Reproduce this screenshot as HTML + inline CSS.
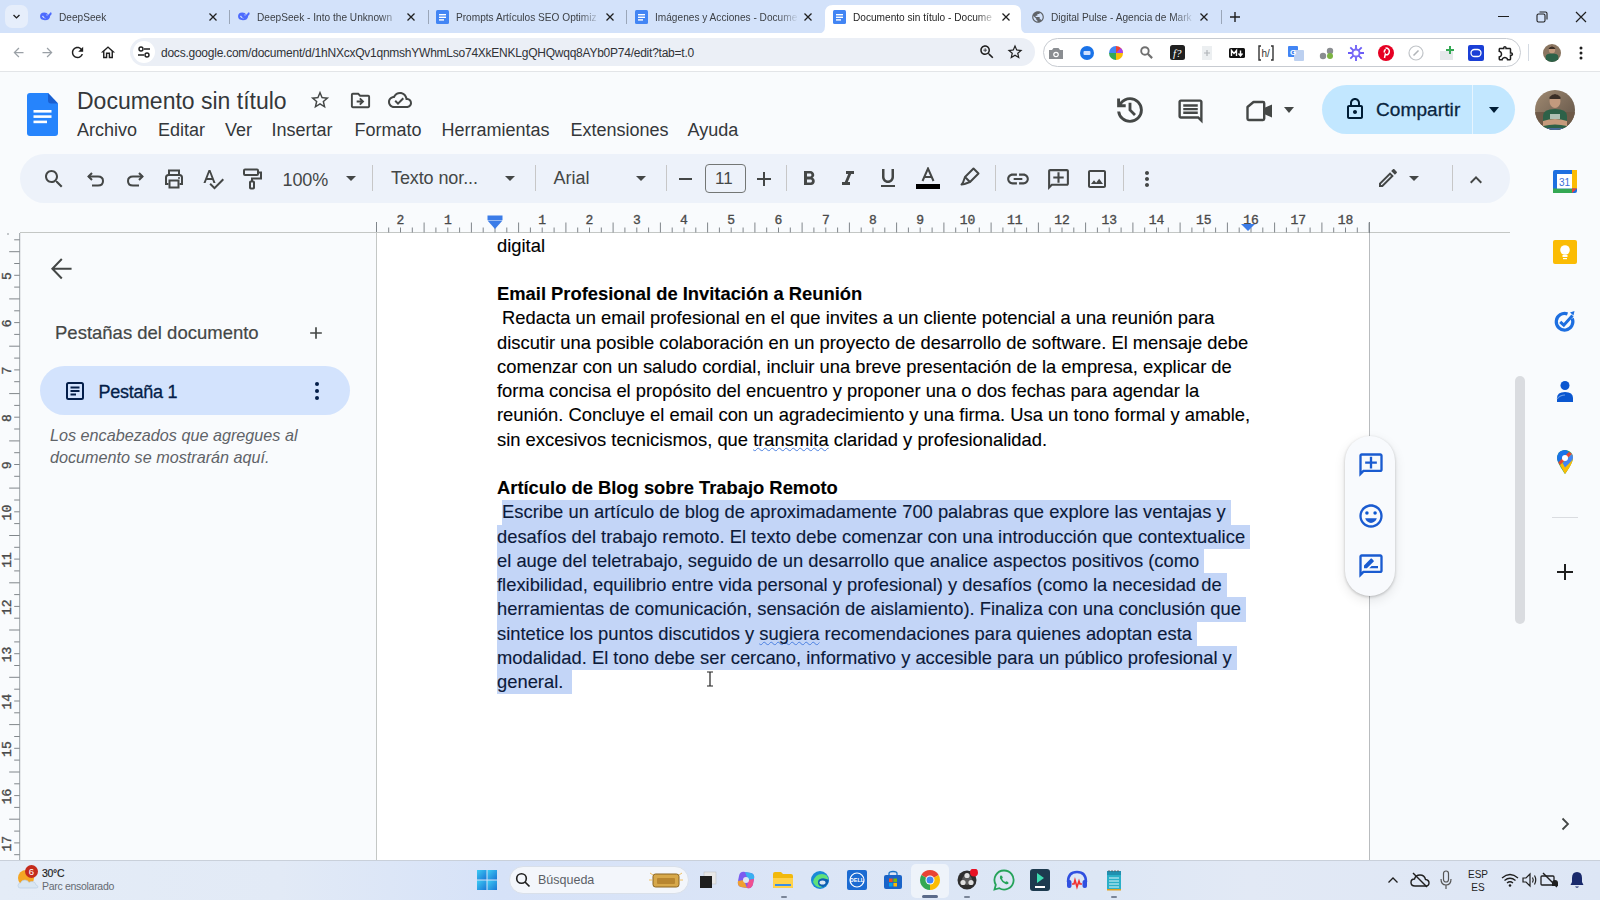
<!DOCTYPE html>
<html><head><meta charset="utf-8">
<style>
*{box-sizing:border-box;margin:0;padding:0}
html,body{width:1600px;height:900px;overflow:hidden;background:#f9fbfd;font-family:"Liberation Sans",sans-serif;position:relative}
.a{position:absolute}
svg{display:block}
.tabstrip{left:0;top:0;width:1600px;height:33px;background:#d3e2fa}
.tab{top:0;height:33px;font-size:11.5px;color:#3d4146;white-space:nowrap}
.tt{top:11px;line-height:13px}
.tx{font-size:15px;color:#1f1f1f;top:8px;line-height:16px}
.sep{width:1px;height:14px;background:#9aa6b8;top:10px}
.addr{left:0;top:33px;width:1600px;height:39px;background:#fff;border-bottom:1px solid #e3e5e8}
.omni{left:130px;top:38px;width:905px;height:28px;border-radius:14px;background:#ebeff6}
.ext{left:1043px;top:38px;width:478px;height:29px;border-radius:15px;border:1px solid #c7cbd1;background:#fff}
.url{left:161px;top:46px;font-size:12px;letter-spacing:-0.24px;color:#303236;line-height:14px;white-space:nowrap}
.menu{top:119.5px;font-size:18px;color:#34373a;line-height:20px;white-space:nowrap}
.title{left:77px;top:88px;font-size:23px;color:#34373a;line-height:26px;white-space:nowrap}
.tbar{left:20px;top:154px;width:1490px;height:49px;border-radius:25px;background:#edf2fa}
.tsep{width:1px;height:26px;background:#c7c7c7;top:165px}
.ttxt{top:168px;font-size:18px;color:#444746;line-height:20px;white-space:nowrap}
.ic{fill:#444746}
.page{left:376px;top:233px;width:994px;height:627px;background:#fff;overflow:hidden}
.doc{left:121px;top:0.5px;font-size:18.37px;line-height:24.25px;color:#000;-webkit-text-stroke:0.12px #000}
.doc div{height:24.25px;white-space:pre}
.sel{background:#c3d5f7;color:#0c1a3a;-webkit-text-stroke:0.12px #0c1a3a;display:inline-block;height:24.25px;vertical-align:top}
.taskbar{left:0;top:860px;width:1600px;height:40px;background:linear-gradient(90deg,#e4ecf7 0,#e2eaf6 280px,#d6e2f8 500px,#dbe5f6 800px,#dde7f5 1100px,#e2e9f5 1250px,#dde6f5 1600px);border-top:1px solid #c9d0da}
</style></head><body>

<!-- TAB STRIP -->
<div class="a tabstrip"></div>
<div class="a" style="left:5px;top:5px;width:23px;height:23px;border-radius:7px;background:#e6eefb"></div>
<svg class="a" style="left:11px;top:11px" width="11" height="11" viewBox="0 0 24 24"><path d="M5.5 8.5l6.5 6.5 6.5-6.5" stroke="#1f1f1f" stroke-width="3" fill="none"/></svg>
<svg class="a" style="left:817px;top:0" width="212" height="34" viewBox="0 0 212 34"><path d="M0 34 Q8 34 8 26 L8 13 Q8 5 16 5 L196 5 Q204 5 204 13 L204 26 Q204 34 212 34 Z" fill="#fff"/></svg>
<div class="a" style="left:39px;top:10px"><svg width="14" height="12" viewBox="0 0 20 16"><path d="M1.5 8.5Q1.5 3 7.5 3 11.5 3 13.5 6.2L16.5 2.5Q18.5 2.8 18 5 17.5 6.5 16 7.5 15.5 14 8.5 14 1.5 14 1.5 8.5Z" fill="#4d6bfe"/><path d="M4 8Q5.5 12 10 11.5 7 10.5 6 7.5Z" fill="#d3e2fa"/><circle cx="11.5" cy="6.5" r="0.9" fill="#d3e2fa"/></svg></div>
<div class="a tab tt" style="left:59px;width:145px;overflow:hidden;-webkit-mask-image:linear-gradient(90deg,#000 85%,transparent)"><span style="display:inline-block;transform:scaleX(0.88);transform-origin:0 0">DeepSeek</span></div>
<div class="a" style="left:208px;top:12px"><svg width="10" height="10" viewBox="0 0 10 10"><path d="M1.5 1.5L8.5 8.5M8.5 1.5L1.5 8.5" stroke="#1f1f1f" stroke-width="1.3"/></svg></div>
<div class="a" style="left:237px;top:10px"><svg width="14" height="12" viewBox="0 0 20 16"><path d="M1.5 8.5Q1.5 3 7.5 3 11.5 3 13.5 6.2L16.5 2.5Q18.5 2.8 18 5 17.5 6.5 16 7.5 15.5 14 8.5 14 1.5 14 1.5 8.5Z" fill="#4d6bfe"/><path d="M4 8Q5.5 12 10 11.5 7 10.5 6 7.5Z" fill="#d3e2fa"/><circle cx="11.5" cy="6.5" r="0.9" fill="#d3e2fa"/></svg></div>
<div class="a tab tt" style="left:257px;width:145px;overflow:hidden;-webkit-mask-image:linear-gradient(90deg,#000 85%,transparent)"><span style="display:inline-block;transform:scaleX(0.88);transform-origin:0 0">DeepSeek - Into the Unknown</span></div>
<div class="a" style="left:406px;top:12px"><svg width="10" height="10" viewBox="0 0 10 10"><path d="M1.5 1.5L8.5 8.5M8.5 1.5L1.5 8.5" stroke="#1f1f1f" stroke-width="1.3"/></svg></div>
<div class="a" style="left:436px;top:10px"><svg width="13" height="14" viewBox="0 0 13 14"><rect x="0" y="0" width="13" height="14" rx="1.5" fill="#4285f4"/><rect x="3" y="4" width="7" height="1.4" fill="#fff"/><rect x="3" y="6.6" width="7" height="1.4" fill="#fff"/><rect x="3" y="9.2" width="5" height="1.4" fill="#fff"/></svg></div>
<div class="a tab tt" style="left:456px;width:145px;overflow:hidden;-webkit-mask-image:linear-gradient(90deg,#000 85%,transparent)"><span style="display:inline-block;transform:scaleX(0.88);transform-origin:0 0">Prompts Artículos SEO Optimiz</span></div>
<div class="a" style="left:605px;top:12px"><svg width="10" height="10" viewBox="0 0 10 10"><path d="M1.5 1.5L8.5 8.5M8.5 1.5L1.5 8.5" stroke="#1f1f1f" stroke-width="1.3"/></svg></div>
<div class="a" style="left:635px;top:10px"><svg width="13" height="14" viewBox="0 0 13 14"><rect x="0" y="0" width="13" height="14" rx="1.5" fill="#4285f4"/><rect x="3" y="4" width="7" height="1.4" fill="#fff"/><rect x="3" y="6.6" width="7" height="1.4" fill="#fff"/><rect x="3" y="9.2" width="5" height="1.4" fill="#fff"/></svg></div>
<div class="a tab tt" style="left:655px;width:144px;overflow:hidden;-webkit-mask-image:linear-gradient(90deg,#000 85%,transparent)"><span style="display:inline-block;transform:scaleX(0.88);transform-origin:0 0">Imágenes y Acciones - Docume</span></div>
<div class="a" style="left:803px;top:12px"><svg width="10" height="10" viewBox="0 0 10 10"><path d="M1.5 1.5L8.5 8.5M8.5 1.5L1.5 8.5" stroke="#1f1f1f" stroke-width="1.3"/></svg></div>
<div class="a" style="left:833px;top:10px"><svg width="13" height="14" viewBox="0 0 13 14"><rect x="0" y="0" width="13" height="14" rx="1.5" fill="#4285f4"/><rect x="3" y="4" width="7" height="1.4" fill="#fff"/><rect x="3" y="6.6" width="7" height="1.4" fill="#fff"/><rect x="3" y="9.2" width="5" height="1.4" fill="#fff"/></svg></div>
<div class="a tab tt" style="color:#1f1f1f;left:853px;width:144px;overflow:hidden;-webkit-mask-image:linear-gradient(90deg,#000 85%,transparent)"><span style="display:inline-block;transform:scaleX(0.88);transform-origin:0 0">Documento sin título - Docume</span></div>
<div class="a" style="left:1001px;top:12px"><svg width="10" height="10" viewBox="0 0 10 10"><path d="M1.5 1.5L8.5 8.5M8.5 1.5L1.5 8.5" stroke="#1f1f1f" stroke-width="1.3"/></svg></div>
<div class="a" style="left:1031px;top:10px"><svg width="14" height="14" viewBox="0 0 24 24"><path d="M12 2C6.48 2 2 6.48 2 12s4.48 10 10 10 10-4.48 10-10S17.52 2 12 2zm-1 17.93c-3.95-.49-7-3.85-7-7.93 0-.62.08-1.21.21-1.79L9 15v1c0 1.1.9 2 2 2v1.93zm6.9-2.54c-.26-.81-1-1.39-1.9-1.39h-1v-3c0-.55-.45-1-1-1H8v-2h2c.55 0 1-.45 1-1V7h2c1.1 0 2-.9 2-2v-.41c2.93 1.19 5 4.06 5 7.41 0 2.08-.8 3.97-2.1 5.39z" fill="#5f6368"/></svg></div>
<div class="a tab tt" style="left:1051px;width:144px;overflow:hidden;-webkit-mask-image:linear-gradient(90deg,#000 85%,transparent)"><span style="display:inline-block;transform:scaleX(0.88);transform-origin:0 0">Digital Pulse - Agencia de Mark</span></div>
<div class="a" style="left:1199px;top:12px"><svg width="10" height="10" viewBox="0 0 10 10"><path d="M1.5 1.5L8.5 8.5M8.5 1.5L1.5 8.5" stroke="#1f1f1f" stroke-width="1.3"/></svg></div>
<div class="a sep" style="left:229px"></div>
<div class="a sep" style="left:428px"></div>
<div class="a sep" style="left:626px"></div>
<div class="a sep" style="left:1221px"></div>
<svg class="a" style="left:1229px;top:11px" width="12" height="12" viewBox="0 0 12 12"><path d="M6 1V11M1 6H11" stroke="#1f1f1f" stroke-width="1.4"/></svg>
<div class="a" style="left:1498px;top:16px;width:11px;height:1px;background:#1f1f1f"></div>
<svg class="a" style="left:1536px;top:11px" width="12" height="12" viewBox="0 0 12 12"><rect x="1" y="3" width="8" height="8" rx="1.5" stroke="#1f1f1f" stroke-width="1.1" fill="none"/><path d="M3.5 1H9.5Q11 1 11 2.5V8.5" stroke="#1f1f1f" stroke-width="1.1" fill="none"/></svg>
<svg class="a" style="left:1575px;top:11px" width="12" height="12" viewBox="0 0 12 12"><path d="M1 1L11 11M11 1L1 11" stroke="#1f1f1f" stroke-width="1.2"/></svg>
<div class="a addr"></div>
<div class="a omni"></div>
<div class="a ext"></div>
<svg class="a" style="left:11px;top:45px" width="15" height="15" viewBox="0 0 24 24"><path d="M20 11H7.83l5.59-5.59L12 4l-8 8 8 8 1.41-1.41L7.83 13H20v-2z" fill="#9aa0a6"/></svg>
<svg class="a" style="left:40px;top:45px" width="15" height="15" viewBox="0 0 24 24"><path d="M4 11h12.17l-5.59-5.59L12 4l8 8-8 8-1.41-1.41L16.17 13H4v-2z" fill="#9aa0a6"/></svg>
<svg class="a" style="left:69px;top:44px" width="17" height="17" viewBox="0 0 24 24"><path d="M17.65 6.35C16.2 4.9 14.21 4 12 4c-4.42 0-7.99 3.58-7.99 8s3.57 8 7.99 8c3.73 0 6.84-2.55 7.73-6h-2.08c-.82 2.33-3.04 4-5.65 4-3.31 0-6-2.69-6-6s2.69-6 6-6c1.66 0 3.14.69 4.22 1.78L13 11h7V4l-2.35 2.35z" fill="#1f1f1f"/></svg>
<svg class="a" style="left:99px;top:44px" width="18" height="17" viewBox="0 0 24 24"><path d="M12 5.69l5 4.5V18h-2v-6H9v6H7v-7.81l5-4.5M12 3L2 12h3v8h6v-6h2v6h6v-8h3L12 3z" fill="#1f1f1f"/></svg>
<div class="a" style="left:133px;top:41px;width:22px;height:22px;border-radius:11px;background:#fff"></div>
<svg class="a" style="left:137px;top:45px" width="14" height="14" viewBox="0 0 14 14"><circle cx="4" cy="4" r="2" stroke="#1f1f1f" stroke-width="1.4" fill="none"/><path d="M7 4H13M1 10H7" stroke="#1f1f1f" stroke-width="1.4"/><circle cx="10" cy="10" r="2" stroke="#1f1f1f" stroke-width="1.4" fill="none"/></svg>
<div class="a url">docs.google.com/document/d/1hNXcxQv1qnmshYWhmLso74XkENKLgQHQwqq8AYb0P74/edit?tab=t.0</div>
<svg class="a" style="left:978px;top:43px" width="18" height="18" viewBox="0 0 24 24"><path d="M15.5 14h-.79l-.28-.27C15.41 12.59 16 11.11 16 9.5 16 5.91 13.09 3 9.5 3S3 5.91 3 9.5 5.91 16 9.5 16c1.61 0 3.09-.59 4.23-1.57l.27.28v.79l5 4.99L20.49 19l-4.99-5zm-6 0C7.01 14 5 11.99 5 9.5S7.01 5 9.5 5 14 7.01 14 9.5 11.99 14 9.5 14zm.5-7H9v2H7v1h2v2h1v-2h2V9h-2z" fill="#1f1f1f"/></svg>
<svg class="a" style="left:1006px;top:43px" width="18" height="18" viewBox="0 0 24 24"><path d="M22 9.24l-7.19-.62L12 2 9.19 8.63 2 9.24l5.46 4.73L5.82 21 12 17.27 18.18 21l-1.63-7.03L22 9.24zM12 15.4l-3.76 2.27 1-4.28-3.32-2.88 4.38-.38L12 6.1l1.71 4.04 4.38.38-3.32 2.88 1 4.28L12 15.4z" fill="#1f1f1f"/></svg>
<div class="a" style="left:1048.0px;top:45.5px"><svg width="16" height="14" viewBox="0 0 16 14"><path d="M1 4h3l1.5-2h5L12 4h3v9H1z" fill="#8a8d91"/><circle cx="8" cy="8.5" r="2.8" fill="#fff"/><circle cx="8" cy="8.5" r="1.6" fill="#8a8d91"/></svg></div>
<div class="a" style="left:1080.0px;top:45.5px"><svg width="14" height="14" viewBox="0 0 14 14"><circle cx="7" cy="7" r="7" fill="#1a73e8"/><rect x="3.5" y="5" width="7" height="4" rx="1" fill="#cfe0ff"/></svg></div>
<div class="a" style="left:1109.0px;top:45.5px"><svg width="14" height="14" viewBox="0 0 14 14"><path d="M7 7L7 0A7 7 0 0 1 14 7Z" fill="#ea4335"/><path d="M7 7L14 7A7 7 0 0 1 7 14Z" fill="#fbbc04"/><path d="M7 7L7 14A7 7 0 0 1 0 7Z" fill="#34a853"/><path d="M7 7L0 7A7 7 0 0 1 7 0Z" fill="#4285f4"/><path d="M7 7L11.9 2.1A7 7 0 0 1 14 7Z" fill="#a142f4"/></svg></div>
<div class="a" style="left:1138.5px;top:45.0px"><svg width="15" height="15" viewBox="0 0 24 24"><circle cx="9.5" cy="9.5" r="6" stroke="#707070" stroke-width="3" fill="none"/><path d="M14 14L21 21" stroke="#707070" stroke-width="3.5"/></svg></div>
<div class="a" style="left:1169.5px;top:45.0px"><svg width="15" height="15" viewBox="0 0 15 15"><rect width="15" height="15" rx="2.5" fill="#202020"/><text x="3" y="12" font-size="11" font-style="italic" font-family="Liberation Serif" fill="#fff">f?</text></svg></div>
<div class="a" style="left:1202.0px;top:45.5px"><svg width="10" height="14" viewBox="0 0 10 14"><rect width="10" height="14" fill="#eceff1"/><path d="M5 4V10M2 7H8" stroke="#b0b4b8" stroke-width="1.2"/></svg></div>
<div class="a" style="left:1229.0px;top:47.5px"><svg width="16" height="10" viewBox="0 0 16 10"><rect width="16" height="10" rx="1.5" fill="#111"/><path d="M2.5 8V2.5L5 5.5 7.5 2.5V8M11.5 2.5V7M9.5 5.5L11.5 8 13.5 5.5" stroke="#fff" stroke-width="1.4" fill="none"/></svg></div>
<div class="a" style="left:1258.0px;top:44.5px"><svg width="16" height="16" viewBox="0 0 16 16"><path d="M3 1H1V15H3M13 1H15V15H13" stroke="#333" stroke-width="1.4" fill="none"/><text x="3.5" y="12" font-size="10" font-family="Liberation Sans" fill="#333">h/</text></svg></div>
<div class="a" style="left:1288.0px;top:44.5px"><svg width="16" height="16" viewBox="0 0 16 16"><rect x="0" y="1" width="10" height="11" rx="1" fill="#4285f4"/><rect x="6" y="5" width="10" height="11" rx="1" fill="#bcd0f0"/><text x="2" y="10" font-size="8" font-weight="bold" font-family="Liberation Sans" fill="#fff">G</text></svg></div>
<div class="a" style="left:1319.0px;top:45.5px"><svg width="16" height="14" viewBox="0 0 16 14"><circle cx="4" cy="10" r="3.2" fill="#8a8d91"/><circle cx="11" cy="5" r="3.2" fill="#8a8d91"/><circle cx="11" cy="10" r="3" fill="#7cb342"/></svg></div>
<div class="a" style="left:1348.0px;top:44.5px"><svg width="16" height="16" viewBox="0 0 16 16"><g stroke="#6b5cf6" stroke-width="1.8"><path d="M8 0V16M0 8H16M2.3 2.3L13.7 13.7M13.7 2.3L2.3 13.7"/></g><circle cx="8" cy="8" r="4.5" fill="#7b6cf6"/><circle cx="8" cy="8" r="2.6" fill="#fff"/></svg></div>
<div class="a" style="left:1376.0px;top:42.5px"><svg width="20" height="20" viewBox="0 0 20 20"><circle cx="10" cy="10" r="10" fill="#fff"/><circle cx="10" cy="10" r="8" fill="#e60023"/><path d="M9.5 5C12.5 5 13.5 7 13.3 8.6 13 10.8 11.6 12 10.3 11.8 9.6 11.7 9.3 11.2 9.3 11.2L8.5 15M8.5 9.5C8 8.2 8.6 6.8 9.8 6.5" stroke="#fff" stroke-width="1.5" fill="none"/></svg></div>
<div class="a" style="left:1408.0px;top:44.5px"><svg width="16" height="16" viewBox="0 0 16 16"><circle cx="8" cy="8" r="7" stroke="#c0c4c8" stroke-width="1.2" fill="#fff"/><path d="M10.5 5.5L6.5 9.5 5.5 10.5" stroke="#b0b4b8" stroke-width="1.6"/></svg></div>
<div class="a" style="left:1439.0px;top:44.5px"><svg width="16" height="16" viewBox="0 0 16 16"><rect x="1" y="6" width="13" height="9" fill="#e5e8ea"/><path d="M11 1V9M7 5H15" stroke="#34a853" stroke-width="2"/></svg></div>
<div class="a" style="left:1468.0px;top:44.5px"><svg width="16" height="16" viewBox="0 0 16 16"><rect width="16" height="16" rx="2" fill="#1a3fd6"/><rect x="3" y="4.5" width="10" height="7" rx="3.5" stroke="#fff" stroke-width="1.3" fill="none"/></svg></div>
<div class="a" style="left:1497px;top:43.5px"><svg width="18" height="18" viewBox="0 0 24 24"><path d="M10.5 4.5c.28 0 .5.22.5.5v2h6v6h2c.28 0 .5.22.5.5s-.22.5-.5.5h-2v6h-2.12c-.68-1.750-2.39-3-4.38-3s-3.7 1.25-4.38 3H4v-2.12c1.75-.68 3-2.39 3-4.38 0-1.99-1.24-3.7-2.990-4.38L4 7h6V5c0-.28.22-.5.5-.5m0-2C9.12 2.5 8 3.62 8 5H4c-1.1 0-1.99.9-1.99 2v3.8h.29c1.49 0 2.7 1.210 2.7 2.7s-1.21 2.7-2.7 2.7H2V20c0 1.1.9 2 2 2h3.8v-.3c0-1.49 1.21-2.7 2.7-2.7s2.7 1.21 2.7 2.7v.3H17c1.1 0 2-.9 2-2v-4c1.38 0 2.5-1.12 2.5-2.5S20.38 11 19 11V7c0-1.1-.9-2-2-2h-4c0-1.38-1.12-2.5-2.5-2.5z" fill="#1f1f1f"/></svg></div>
<div class="a" style="left:1528px;top:44px;width:1px;height:17px;background:#d5dbe3"></div>
<svg class="a" style="left:1543px;top:44px" width="18" height="18" viewBox="0 0 40 40"><defs><clipPath id="av2"><circle cx="20" cy="20" r="20"/></clipPath></defs><g clip-path="url(#av2)"><rect width="40" height="40" fill="#8a7560"/><ellipse cx="20" cy="13" rx="7" ry="8.5" fill="#c29a7e"/><path d="M13 9Q20 1 27 9V11H13Z" fill="#3a2e26"/><path d="M6 40V28Q6 21 20 21 34 21 34 28V40Z" fill="#2d6148"/></g></svg>
<svg class="a" style="left:1577px;top:45px" width="8" height="16" viewBox="0 0 8 16"><circle cx="4" cy="3" r="1.5" fill="#1f1f1f"/><circle cx="4" cy="8" r="1.5" fill="#1f1f1f"/><circle cx="4" cy="13" r="1.5" fill="#1f1f1f"/></svg>
<svg class="a" style="left:27px;top:92.5px" width="31" height="43" viewBox="0 0 31 43"><path d="M3 0H21L31 10.5V40Q31 43 28 43H3Q0 43 0 40V3Q0 0 3 0Z" fill="#2684fc"/><path d="M21 0L31 10.5H24Q21 10.5 21 7.5Z" fill="#1a5fd0"/><rect x="6.5" y="17" width="18" height="2.6" fill="#fff"/><rect x="6.5" y="22.3" width="18" height="2.6" fill="#fff"/><rect x="6.5" y="27.6" width="13.5" height="2.6" fill="#fff"/></svg>
<div class="a title">Documento sin título</div>
<svg class="a" style="left:309px;top:89px" width="22" height="22" viewBox="0 0 24 24"><path d="M22 9.24l-7.19-.62L12 2 9.19 8.63 2 9.24l5.46 4.73L5.82 21 12 17.27 18.18 21l-1.63-7.03L22 9.24zM12 15.4l-3.76 2.27 1-4.28-3.32-2.88 4.38-.38L12 6.1l1.71 4.04 4.38.38-3.32 2.88 1 4.28L12 15.4z" fill="#444746"/></svg>
<svg class="a" style="left:349px;top:89px" width="23" height="23" viewBox="0 0 24 24"><path d="M20 6h-8l-2-2H4c-1.1 0-1.99.9-1.99 2L2 18c0 1.1.9 2 2 2h16c1.1 0 2-.9 2-2V8c0-1.1-.9-2-2-2zm0 12H4V6h5.17l2 2H20v10zm-7.84-6H8v2h4.16l-1.59 1.59L11.99 17 16 13.01 11.99 9l-1.41 1.41L12.16 12z" fill="#444746"/></svg>
<svg class="a" style="left:388px;top:88px" width="24" height="24" viewBox="0 0 24 24"><path d="M19.35 10.04C18.67 6.59 15.64 4 12 4 9.11 4 6.6 5.64 5.35 8.04 2.34 8.36 0 10.91 0 14c0 3.31 2.69 6 6 6h13c2.76 0 5-2.24 5-5 0-2.64-2.05-4.78-4.65-4.96zM19 18H6c-2.21 0-4-1.79-4-4 0-2.05 1.53-3.76 3.56-3.97l1.07-.11.5-.95C8.08 7.14 9.94 6 12 6c2.62 0 4.88 1.86 5.39 4.43l.3 1.5 1.53.11c1.56.1 2.78 1.41 2.78 2.96 0 1.65-1.35 3-3 3zm-9-3.82l-2.09-2.09L6.5 13.5 10 17l6.01-6.01-1.41-1.41z" fill="#444746"/></svg>
<div class="a menu" style="left:77px">Archivo</div>
<div class="a menu" style="left:158px">Editar</div>
<div class="a menu" style="left:225px">Ver</div>
<div class="a menu" style="left:271.5px">Insertar</div>
<div class="a menu" style="left:354.5px">Formato</div>
<div class="a menu" style="left:441.5px">Herramientas</div>
<div class="a menu" style="left:570.5px">Extensiones</div>
<div class="a menu" style="left:687.5px">Ayuda</div>
<svg class="a" style="left:1115px;top:95px" width="30" height="30" viewBox="60 -900 840 840"><path d="M480-120q-138 0-240.5-91.5T122-440h82q14 104 92.5 172T480-200q117 0 198.5-81.5T760-480q0-117-81.5-198.5T480-760q-69 0-129 32t-101 88h110v80H120v-240h80v94q51-64 124.5-99T480-840q75 0 140.5 28.5t114 77q48.5 48.5 77 114T840-480q0 75-28.5 140.5t-77 114q-48.5 48.5-114 77T480-120Zm112-192L440-464v-216h80v184l128 128-56 56Z" fill="#444746"/></svg>
<svg class="a" style="left:1176px;top:96.5px" width="29" height="29" viewBox="0 0 24 24"><path d="M21.99 4c0-1.1-.89-2-1.99-2H4c-1.1 0-2 .9-2 2v12c0 1.1.9 2 2 2h14l4 4-.01-18zM20 4v13.17L18.83 16H4V4h16zM6 12h12v2H6zm0-3h12v2H6zm0-3h12v2H6z" fill="#444746"/></svg>
<svg class="a" style="left:1240px;top:95px" width="36" height="30" viewBox="1240 95 36 30"><path d="M1247.5 107 L1253.5 102 H1263 Q1264.2 102 1264.2 103.2 V118.8 Q1264.2 120 1263 120 H1248.7 Q1247.5 120 1247.5 118.8 Z" stroke="#444746" stroke-width="2.4" fill="none" stroke-linejoin="round"/><path d="M1264 108 L1272 104.5 V117.5 L1264 114 Z" fill="#444746"/></svg>
<svg class="a" style="left:1283px;top:106px" width="12" height="8" viewBox="0 0 12 8"><path d="M1 1H11L6 7Z" fill="#444746"/></svg>
<div class="a" style="left:1322px;top:85px;width:193px;height:49px;border-radius:25px;background:#c2e7ff"></div>
<div class="a" style="left:1471.5px;top:85px;width:1.2px;height:49px;background:#e6f4fe"></div>
<svg class="a" style="left:1343px;top:97px" width="24" height="24" viewBox="0 0 24 24"><path d="M18 8h-1V6c0-2.76-2.24-5-5-5S7 3.24 7 6v2H6c-1.1 0-2 .9-2 2v10c0 1.1.9 2 2 2h12c1.1 0 2-.9 2-2V10c0-1.1-.9-2-2-2zM9 6c0-1.66 1.34-3 3-3s3 1.34 3 3v2H9V6zm9 14H6V10h12v10zm-6-3c1.1 0 2-.9 2-2s-.9-2-2-2-2 .9-2 2 .9 2 2 2z" fill="#001d35"/></svg>
<div class="a" style="left:1376px;top:99px;font-size:19px;line-height:22px;color:#0a2540;white-space:nowrap;letter-spacing:0.1px;-webkit-text-stroke:0.3px #0a2540">Compartir</div>
<svg class="a" style="left:1488px;top:106px" width="12" height="8" viewBox="0 0 12 8"><path d="M1 1H11L6 7Z" fill="#001d35"/></svg>
<svg class="a" style="left:1535px;top:90px" width="40" height="40" viewBox="0 0 40 40"><defs><clipPath id="av"><circle cx="20" cy="20" r="20"/></clipPath><linearGradient id="avbg" x1="0" y1="0" x2="1" y2="1"><stop offset="0" stop-color="#a08a72"/><stop offset="1" stop-color="#5e5044"/></linearGradient></defs><g clip-path="url(#av)"><rect width="40" height="40" fill="url(#avbg)"/><rect x="0" y="22" width="40" height="18" fill="#6e5a48"/><ellipse cx="20" cy="11" rx="5.5" ry="7" fill="#c29a7e"/><path d="M14.5 7Q20 1 25.5 7V9H14.5Z" fill="#3a2e26"/><path d="M8 40V26Q8 19 20 19 32 19 32 26V40Z" fill="#2d6148"/><path d="M15 24H25V29H15Z" fill="#cfd8d0" opacity=".8"/><path d="M8 31Q20 27 32 31V36Q20 33 8 36Z" fill="#c69a7c"/><rect x="10" y="38" width="20" height="2" fill="#4a6a9a"/></g></svg>
<div class="a tbar"></div>
<svg class="a" style="left:42.0px;top:167.0px" width="24" height="24" viewBox="0 0 24 24"><path d="M15.5 14h-.79l-.28-.27C15.41 12.59 16 11.11 16 9.5 16 5.91 13.09 3 9.5 3S3 5.91 3 9.5 5.91 16 9.5 16c1.61 0 3.09-.59 4.23-1.57l.27.28v.79l5 4.99L20.49 19l-4.99-5zm-6 0C7.01 14 5 11.99 5 9.5S7.01 5 9.5 5 14 7.01 14 9.5 11.99 14 9.5 14z" fill="#444746"/></svg>
<svg class="a" style="left:84px;top:167px" width="24" height="24" viewBox="0 0 24 24"><path d="M8 6L4.5 9.5 8 13" stroke="#444746" stroke-width="2" fill="none"/><path d="M4.5 9.5H14Q19 9.5 19 14 19 18.5 14 18.5H8" stroke="#444746" stroke-width="2" fill="none"/></svg>
<svg class="a" style="left:123px;top:167px" width="24" height="24" viewBox="0 0 24 24"><path d="M16 6L19.5 9.5 16 13" stroke="#444746" stroke-width="2" fill="none"/><path d="M19.5 9.5H10Q5 9.5 5 14 5 18.5 10 18.5H16" stroke="#444746" stroke-width="2" fill="none"/></svg>
<svg class="a" style="left:162px;top:167px" width="24" height="24" viewBox="0 0 24 24"><path d="M7 7V3.5H17V7" stroke="#444746" stroke-width="2" fill="none"/><path d="M6.5 17H4V10.5Q4 8 6.5 8H17.5Q20 8 20 10.5V17H17.5" stroke="#444746" stroke-width="2" fill="none"/><rect x="7.5" y="13.5" width="9" height="7" stroke="#444746" stroke-width="2" fill="none"/><circle cx="17" cy="11" r="1" fill="#444746"/></svg>
<svg class="a" style="left:201.0px;top:167.0px" width="24" height="24" viewBox="0 0 24 24"><path d="M12.45 16h2.09L9.43 3H7.57L2.46 16h2.09l1.12-3h5.64l1.14 3zm-6.02-5L8.5 5.48 10.57 11H6.43zm15.16.59l-8.09 8.09L9.83 16l-1.41 1.41 5.09 5.09L23 13l-1.41-1.41z" fill="#444746"/></svg>
<svg class="a" style="left:240px;top:167px" width="24" height="24" viewBox="0 0 24 24"><rect x="4" y="2.5" width="14" height="5.5" rx="1" stroke="#444746" stroke-width="2" fill="none"/><path d="M18 5.5H21V11.5H12V14" stroke="#444746" stroke-width="2" fill="none"/><rect x="10" y="14.5" width="4" height="7" rx="0.8" stroke="#444746" stroke-width="2" fill="none"/></svg>
<div class="a ttxt" style="left:282.5px;top:169.5px;letter-spacing:-0.1px">100%</div>
<svg class="a" style="left:344.5px;top:175px" width="12" height="7" viewBox="0 0 12 7"><path d="M1 1H11L6 6Z" fill="#444746"/></svg>
<div class="a tsep" style="left:372px"></div>
<div class="a tsep" style="left:535px"></div>
<div class="a tsep" style="left:665.5px"></div>
<div class="a tsep" style="left:786px"></div>
<div class="a tsep" style="left:995px"></div>
<div class="a tsep" style="left:1123px"></div>
<div class="a tsep" style="left:1452px"></div>
<div class="a ttxt" style="left:391px;letter-spacing:-0.1px">Texto nor...</div>
<svg class="a" style="left:504px;top:175px" width="12" height="7" viewBox="0 0 12 7"><path d="M1 1H11L6 6Z" fill="#444746"/></svg>
<div class="a ttxt" style="left:553.5px">Arial</div>
<svg class="a" style="left:635px;top:175px" width="12" height="7" viewBox="0 0 12 7"><path d="M1 1H11L6 6Z" fill="#444746"/></svg>
<div class="a" style="left:679px;top:178px;width:13px;height:2px;background:#444746"></div>
<div class="a" style="left:705px;top:164px;width:41px;height:29px;border:1px solid #747775;border-radius:4px"></div>
<div class="a ttxt" style="left:715px;top:169px;font-size:17px">11</div>
<svg class="a" style="left:756px;top:171px" width="16" height="16" viewBox="0 0 16 16"><path d="M8 1V15M1 8H15" stroke="#444746" stroke-width="2"/></svg>
<svg class="a" style="left:797.0px;top:167.0px" width="24" height="24" viewBox="0 0 24 24"><path d="M15.6 10.79c.97-.67 1.65-1.77 1.65-2.79 0-2.26-1.75-4-4-4H7v14h7.04c2.09 0 3.71-1.7 3.71-3.79 0-1.52-.86-2.82-2.15-3.42zM10 6.5h3c.83 0 1.5.67 1.5 1.5s-.67 1.5-1.5 1.5h-3v-3zm3.5 9H10v-3h3.5c.83 0 1.5.67 1.5 1.5s-.67 1.5-1.5 1.5z" fill="#444746"/></svg>
<svg class="a" style="left:835.5px;top:167.0px" width="24" height="24" viewBox="0 0 24 24"><path d="M10 4v3h2.21l-3.42 8H6v3h8v-3h-2.21l3.42-8H18V4z" fill="#444746"/></svg>
<svg class="a" style="left:875.5px;top:166.0px" width="24" height="24" viewBox="0 0 24 24"><path d="M12 17c3.31 0 6-2.69 6-6V3h-2.5v8c0 1.93-1.57 3.5-3.5 3.5S8.5 12.93 8.5 11V3H6v8c0 3.31 2.69 6 6 6zm-7 2v2h14v-2H5z" fill="#444746"/></svg>
<svg class="a" style="left:916px;top:167px" width="24" height="22" viewBox="0 0 24 22"><path d="M6.5 14L12 1.5 17.5 14M8.3 10H15.7" stroke="#444746" stroke-width="2" fill="none"/><rect x="-1" y="17" width="26" height="5" fill="#000"/></svg>
<svg class="a" style="left:958px;top:165px" width="24" height="24" viewBox="0 0 24 24"><path d="M15.5 3.5L20.5 8.5 12 17 7 12Z" stroke="#444746" stroke-width="2" fill="none" stroke-linejoin="round"/><path d="M7 12L5 17.5 3.5 19.5 6.5 19 12 17" stroke="#444746" stroke-width="2" fill="none" stroke-linejoin="round"/></svg>
<svg class="a" style="left:1005.0px;top:166.0px" width="26" height="26" viewBox="0 0 24 24"><path d="M3.9 12c0-1.71 1.39-3.1 3.1-3.1h4V7H7c-2.76 0-5 2.24-5 5s2.24 5 5 5h4v-1.9H7c-1.71 0-3.1-1.39-3.1-3.1zM8 13h8v-2H8v2zm9-6h-4v1.9h4c1.71 0 3.1 1.39 3.1 3.1s-1.39 3.1-3.1 3.1h-4V17h4c2.76 0 5-2.24 5-5s-2.24-5-5-5z" fill="#444746"/></svg>
<svg class="a" style="left:1045.5px;top:166.5px" width="25" height="25" viewBox="0 0 24 24"><path d="M22 4c0-1.1-.9-2-2-2H4c-1.1 0-1.99.9-1.99 2L2 22l4-4h14c1.1 0 2-.9 2-2V4zm-2 12H5.17L4 17.17V4h16v12zM13 5h-2v4H7v2h4v4h2v-4h4V9h-4z" fill="#444746"/></svg>
<svg class="a" style="left:1085.0px;top:167.0px" width="24" height="24" viewBox="0 0 24 24"><path d="M19 5v14H5V5h14m0-2H5c-1.1 0-2 .9-2 2v14c0 1.1.9 2 2 2h14c1.1 0 2-.9 2-2V5c0-1.1-.9-2-2-2zm-4.86 8.86l-3 3.87L9 13.14 6 17h12l-3.86-5.14z" fill="#444746"/></svg>
<svg class="a" style="left:1135.0px;top:167.0px" width="24" height="24" viewBox="0 0 24 24"><path d="M12 8c1.1 0 2-.9 2-2s-.9-2-2-2-2 .9-2 2 .9 2 2 2zm0 2c-1.1 0-2 .9-2 2s.9 2 2 2 2-.9 2-2-.9-2-2-2zm0 6c-1.1 0-2 .9-2 2s.9 2 2 2 2-.9 2-2-.9-2-2-2z" fill="#444746"/></svg>
<svg class="a" style="left:1376.0px;top:166.0px" width="24" height="24" viewBox="0 0 24 24"><path d="M14.06 9.02l.92.92L5.92 19H5v-.92l9.06-9.06M17.66 3c-.25 0-.51.1-.7.29l-1.83 1.83 3.75 3.75 1.83-1.83c.39-.39.39-1.02 0-1.41l-2.34-2.34c-.2-.2-.45-.29-.71-.29zm-3.6 3.19L3 17.25V21h3.75L17.81 9.94l-3.75-3.75z" fill="#444746"/></svg>
<svg class="a" style="left:1408px;top:175px" width="12" height="7" viewBox="0 0 12 7"><path d="M1 1H11L6 6Z" fill="#444746"/></svg>
<svg class="a" style="left:1463.5px;top:168.0px" width="24" height="24" viewBox="0 0 24 24"><path d="M12 8l-6 6 1.41 1.41L12 10.83l4.59 4.58L18 14z" fill="#444746"/></svg>
<svg class="a" style="left:370px;top:205px" width="1145" height="30" viewBox="370 205 1145 30"><path d="M376 232.5H1510" stroke="#c4c7c5" stroke-width="1"/><path d="M388.7 227.5V232.5" stroke="#80868b" stroke-width="1"/><path d="M400.5 227.5V232.5" stroke="#80868b" stroke-width="1"/><text x="400.5" y="224" font-size="13" font-family="Liberation Mono" fill="#4a4a4a" stroke="#4a4a4a" stroke-width="0.35" text-anchor="middle">2</text><path d="M412.3 227.5V232.5" stroke="#80868b" stroke-width="1"/><path d="M424.1 222.5V232.5" stroke="#80868b" stroke-width="1"/><path d="M435.9 227.5V232.5" stroke="#80868b" stroke-width="1"/><path d="M447.8 227.5V232.5" stroke="#80868b" stroke-width="1"/><text x="447.8" y="224" font-size="13" font-family="Liberation Mono" fill="#4a4a4a" stroke="#4a4a4a" stroke-width="0.35" text-anchor="middle">1</text><path d="M459.6 227.5V232.5" stroke="#80868b" stroke-width="1"/><path d="M471.4 222.5V232.5" stroke="#80868b" stroke-width="1"/><path d="M483.2 227.5V232.5" stroke="#80868b" stroke-width="1"/><path d="M495.0 227.5V232.5" stroke="#80868b" stroke-width="1"/><path d="M506.8 227.5V232.5" stroke="#80868b" stroke-width="1"/><path d="M518.6 222.5V232.5" stroke="#80868b" stroke-width="1"/><path d="M530.4 227.5V232.5" stroke="#80868b" stroke-width="1"/><path d="M542.2 227.5V232.5" stroke="#80868b" stroke-width="1"/><text x="542.2" y="224" font-size="13" font-family="Liberation Mono" fill="#4a4a4a" stroke="#4a4a4a" stroke-width="0.35" text-anchor="middle">1</text><path d="M554.1 227.5V232.5" stroke="#80868b" stroke-width="1"/><path d="M565.9 222.5V232.5" stroke="#80868b" stroke-width="1"/><path d="M577.7 227.5V232.5" stroke="#80868b" stroke-width="1"/><path d="M589.5 227.5V232.5" stroke="#80868b" stroke-width="1"/><text x="589.5" y="224" font-size="13" font-family="Liberation Mono" fill="#4a4a4a" stroke="#4a4a4a" stroke-width="0.35" text-anchor="middle">2</text><path d="M601.3 227.5V232.5" stroke="#80868b" stroke-width="1"/><path d="M613.1 222.5V232.5" stroke="#80868b" stroke-width="1"/><path d="M624.9 227.5V232.5" stroke="#80868b" stroke-width="1"/><path d="M636.8 227.5V232.5" stroke="#80868b" stroke-width="1"/><text x="636.8" y="224" font-size="13" font-family="Liberation Mono" fill="#4a4a4a" stroke="#4a4a4a" stroke-width="0.35" text-anchor="middle">3</text><path d="M648.6 227.5V232.5" stroke="#80868b" stroke-width="1"/><path d="M660.4 222.5V232.5" stroke="#80868b" stroke-width="1"/><path d="M672.2 227.5V232.5" stroke="#80868b" stroke-width="1"/><path d="M684.0 227.5V232.5" stroke="#80868b" stroke-width="1"/><text x="684.0" y="224" font-size="13" font-family="Liberation Mono" fill="#4a4a4a" stroke="#4a4a4a" stroke-width="0.35" text-anchor="middle">4</text><path d="M695.8 227.5V232.5" stroke="#80868b" stroke-width="1"/><path d="M707.6 222.5V232.5" stroke="#80868b" stroke-width="1"/><path d="M719.4 227.5V232.5" stroke="#80868b" stroke-width="1"/><path d="M731.2 227.5V232.5" stroke="#80868b" stroke-width="1"/><text x="731.2" y="224" font-size="13" font-family="Liberation Mono" fill="#4a4a4a" stroke="#4a4a4a" stroke-width="0.35" text-anchor="middle">5</text><path d="M743.1 227.5V232.5" stroke="#80868b" stroke-width="1"/><path d="M754.9 222.5V232.5" stroke="#80868b" stroke-width="1"/><path d="M766.7 227.5V232.5" stroke="#80868b" stroke-width="1"/><path d="M778.5 227.5V232.5" stroke="#80868b" stroke-width="1"/><text x="778.5" y="224" font-size="13" font-family="Liberation Mono" fill="#4a4a4a" stroke="#4a4a4a" stroke-width="0.35" text-anchor="middle">6</text><path d="M790.3 227.5V232.5" stroke="#80868b" stroke-width="1"/><path d="M802.1 222.5V232.5" stroke="#80868b" stroke-width="1"/><path d="M813.9 227.5V232.5" stroke="#80868b" stroke-width="1"/><path d="M825.8 227.5V232.5" stroke="#80868b" stroke-width="1"/><text x="825.8" y="224" font-size="13" font-family="Liberation Mono" fill="#4a4a4a" stroke="#4a4a4a" stroke-width="0.35" text-anchor="middle">7</text><path d="M837.6 227.5V232.5" stroke="#80868b" stroke-width="1"/><path d="M849.4 222.5V232.5" stroke="#80868b" stroke-width="1"/><path d="M861.2 227.5V232.5" stroke="#80868b" stroke-width="1"/><path d="M873.0 227.5V232.5" stroke="#80868b" stroke-width="1"/><text x="873.0" y="224" font-size="13" font-family="Liberation Mono" fill="#4a4a4a" stroke="#4a4a4a" stroke-width="0.35" text-anchor="middle">8</text><path d="M884.8 227.5V232.5" stroke="#80868b" stroke-width="1"/><path d="M896.6 222.5V232.5" stroke="#80868b" stroke-width="1"/><path d="M908.4 227.5V232.5" stroke="#80868b" stroke-width="1"/><path d="M920.2 227.5V232.5" stroke="#80868b" stroke-width="1"/><text x="920.2" y="224" font-size="13" font-family="Liberation Mono" fill="#4a4a4a" stroke="#4a4a4a" stroke-width="0.35" text-anchor="middle">9</text><path d="M932.1 227.5V232.5" stroke="#80868b" stroke-width="1"/><path d="M943.9 222.5V232.5" stroke="#80868b" stroke-width="1"/><path d="M955.7 227.5V232.5" stroke="#80868b" stroke-width="1"/><path d="M967.5 227.5V232.5" stroke="#80868b" stroke-width="1"/><text x="967.5" y="224" font-size="13" font-family="Liberation Mono" fill="#4a4a4a" stroke="#4a4a4a" stroke-width="0.35" text-anchor="middle">10</text><path d="M979.3 227.5V232.5" stroke="#80868b" stroke-width="1"/><path d="M991.1 222.5V232.5" stroke="#80868b" stroke-width="1"/><path d="M1002.9 227.5V232.5" stroke="#80868b" stroke-width="1"/><path d="M1014.8 227.5V232.5" stroke="#80868b" stroke-width="1"/><text x="1014.8" y="224" font-size="13" font-family="Liberation Mono" fill="#4a4a4a" stroke="#4a4a4a" stroke-width="0.35" text-anchor="middle">11</text><path d="M1026.6 227.5V232.5" stroke="#80868b" stroke-width="1"/><path d="M1038.4 222.5V232.5" stroke="#80868b" stroke-width="1"/><path d="M1050.2 227.5V232.5" stroke="#80868b" stroke-width="1"/><path d="M1062.0 227.5V232.5" stroke="#80868b" stroke-width="1"/><text x="1062.0" y="224" font-size="13" font-family="Liberation Mono" fill="#4a4a4a" stroke="#4a4a4a" stroke-width="0.35" text-anchor="middle">12</text><path d="M1073.8 227.5V232.5" stroke="#80868b" stroke-width="1"/><path d="M1085.6 222.5V232.5" stroke="#80868b" stroke-width="1"/><path d="M1097.4 227.5V232.5" stroke="#80868b" stroke-width="1"/><path d="M1109.2 227.5V232.5" stroke="#80868b" stroke-width="1"/><text x="1109.2" y="224" font-size="13" font-family="Liberation Mono" fill="#4a4a4a" stroke="#4a4a4a" stroke-width="0.35" text-anchor="middle">13</text><path d="M1121.1 227.5V232.5" stroke="#80868b" stroke-width="1"/><path d="M1132.9 222.5V232.5" stroke="#80868b" stroke-width="1"/><path d="M1144.7 227.5V232.5" stroke="#80868b" stroke-width="1"/><path d="M1156.5 227.5V232.5" stroke="#80868b" stroke-width="1"/><text x="1156.5" y="224" font-size="13" font-family="Liberation Mono" fill="#4a4a4a" stroke="#4a4a4a" stroke-width="0.35" text-anchor="middle">14</text><path d="M1168.3 227.5V232.5" stroke="#80868b" stroke-width="1"/><path d="M1180.1 222.5V232.5" stroke="#80868b" stroke-width="1"/><path d="M1191.9 227.5V232.5" stroke="#80868b" stroke-width="1"/><path d="M1203.8 227.5V232.5" stroke="#80868b" stroke-width="1"/><text x="1203.8" y="224" font-size="13" font-family="Liberation Mono" fill="#4a4a4a" stroke="#4a4a4a" stroke-width="0.35" text-anchor="middle">15</text><path d="M1215.6 227.5V232.5" stroke="#80868b" stroke-width="1"/><path d="M1227.4 222.5V232.5" stroke="#80868b" stroke-width="1"/><path d="M1239.2 227.5V232.5" stroke="#80868b" stroke-width="1"/><path d="M1251.0 227.5V232.5" stroke="#80868b" stroke-width="1"/><text x="1251.0" y="224" font-size="13" font-family="Liberation Mono" fill="#4a4a4a" stroke="#4a4a4a" stroke-width="0.35" text-anchor="middle">16</text><path d="M1262.8 227.5V232.5" stroke="#80868b" stroke-width="1"/><path d="M1274.6 222.5V232.5" stroke="#80868b" stroke-width="1"/><path d="M1286.4 227.5V232.5" stroke="#80868b" stroke-width="1"/><path d="M1298.2 227.5V232.5" stroke="#80868b" stroke-width="1"/><text x="1298.2" y="224" font-size="13" font-family="Liberation Mono" fill="#4a4a4a" stroke="#4a4a4a" stroke-width="0.35" text-anchor="middle">17</text><path d="M1310.1 227.5V232.5" stroke="#80868b" stroke-width="1"/><path d="M1321.9 222.5V232.5" stroke="#80868b" stroke-width="1"/><path d="M1333.7 227.5V232.5" stroke="#80868b" stroke-width="1"/><path d="M1345.5 227.5V232.5" stroke="#80868b" stroke-width="1"/><text x="1345.5" y="224" font-size="13" font-family="Liberation Mono" fill="#4a4a4a" stroke="#4a4a4a" stroke-width="0.35" text-anchor="middle">18</text><path d="M1357.3 227.5V232.5" stroke="#80868b" stroke-width="1"/><path d="M1369.1 222.5V232.5" stroke="#80868b" stroke-width="1"/><path d="M376.5 222V233" stroke="#80868b" stroke-width="1"/><path d="M1369.5 222V233" stroke="#80868b" stroke-width="1"/><rect x="487.5" y="215.5" width="15" height="4.5" fill="#3b7ce8"/><path d="M487.5 220.5H502.5L495 229Z" fill="#3b7ce8"/><path d="M1241 224H1255L1248 231Z" fill="#3b7ce8"/></svg>
<svg class="a" style="left:0;top:233px" width="22" height="627" viewBox="0 233 22 627"><path d="M19.7 233V860" stroke="#9aa0a6" stroke-width="1"/><path d="M14.2 239.8H19.7" stroke="#80868b" stroke-width="1"/><path d="M9.2 251.7H19.7" stroke="#80868b" stroke-width="1"/><path d="M14.2 263.5H19.7" stroke="#80868b" stroke-width="1"/><path d="M14.2 275.3H19.7" stroke="#80868b" stroke-width="1"/><text x="0" y="0" transform="translate(10.5 276.1) rotate(-90)" font-size="13" font-family="Liberation Mono" fill="#4a4a4a" stroke="#4a4a4a" stroke-width="0.35" text-anchor="middle">5</text><path d="M14.2 287.1H19.7" stroke="#80868b" stroke-width="1"/><path d="M9.2 298.9H19.7" stroke="#80868b" stroke-width="1"/><path d="M14.2 310.8H19.7" stroke="#80868b" stroke-width="1"/><path d="M14.2 322.6H19.7" stroke="#80868b" stroke-width="1"/><text x="0" y="0" transform="translate(10.5 323.4) rotate(-90)" font-size="13" font-family="Liberation Mono" fill="#4a4a4a" stroke="#4a4a4a" stroke-width="0.35" text-anchor="middle">6</text><path d="M14.2 334.4H19.7" stroke="#80868b" stroke-width="1"/><path d="M9.2 346.2H19.7" stroke="#80868b" stroke-width="1"/><path d="M14.2 358.1H19.7" stroke="#80868b" stroke-width="1"/><path d="M14.2 369.9H19.7" stroke="#80868b" stroke-width="1"/><text x="0" y="0" transform="translate(10.5 370.7) rotate(-90)" font-size="13" font-family="Liberation Mono" fill="#4a4a4a" stroke="#4a4a4a" stroke-width="0.35" text-anchor="middle">7</text><path d="M14.2 381.7H19.7" stroke="#80868b" stroke-width="1"/><path d="M9.2 393.6H19.7" stroke="#80868b" stroke-width="1"/><path d="M14.2 405.4H19.7" stroke="#80868b" stroke-width="1"/><path d="M14.2 417.2H19.7" stroke="#80868b" stroke-width="1"/><text x="0" y="0" transform="translate(10.5 418.0) rotate(-90)" font-size="13" font-family="Liberation Mono" fill="#4a4a4a" stroke="#4a4a4a" stroke-width="0.35" text-anchor="middle">8</text><path d="M14.2 429.0H19.7" stroke="#80868b" stroke-width="1"/><path d="M9.2 440.9H19.7" stroke="#80868b" stroke-width="1"/><path d="M14.2 452.7H19.7" stroke="#80868b" stroke-width="1"/><path d="M14.2 464.5H19.7" stroke="#80868b" stroke-width="1"/><text x="0" y="0" transform="translate(10.5 465.3) rotate(-90)" font-size="13" font-family="Liberation Mono" fill="#4a4a4a" stroke="#4a4a4a" stroke-width="0.35" text-anchor="middle">9</text><path d="M14.2 476.3H19.7" stroke="#80868b" stroke-width="1"/><path d="M9.2 488.1H19.7" stroke="#80868b" stroke-width="1"/><path d="M14.2 500.0H19.7" stroke="#80868b" stroke-width="1"/><path d="M14.2 511.8H19.7" stroke="#80868b" stroke-width="1"/><text x="0" y="0" transform="translate(10.5 512.6) rotate(-90)" font-size="13" font-family="Liberation Mono" fill="#4a4a4a" stroke="#4a4a4a" stroke-width="0.35" text-anchor="middle">10</text><path d="M14.2 523.6H19.7" stroke="#80868b" stroke-width="1"/><path d="M9.2 535.5H19.7" stroke="#80868b" stroke-width="1"/><path d="M14.2 547.3H19.7" stroke="#80868b" stroke-width="1"/><path d="M14.2 559.1H19.7" stroke="#80868b" stroke-width="1"/><text x="0" y="0" transform="translate(10.5 559.9) rotate(-90)" font-size="13" font-family="Liberation Mono" fill="#4a4a4a" stroke="#4a4a4a" stroke-width="0.35" text-anchor="middle">11</text><path d="M14.2 570.9H19.7" stroke="#80868b" stroke-width="1"/><path d="M9.2 582.8H19.7" stroke="#80868b" stroke-width="1"/><path d="M14.2 594.6H19.7" stroke="#80868b" stroke-width="1"/><path d="M14.2 606.4H19.7" stroke="#80868b" stroke-width="1"/><text x="0" y="0" transform="translate(10.5 607.2) rotate(-90)" font-size="13" font-family="Liberation Mono" fill="#4a4a4a" stroke="#4a4a4a" stroke-width="0.35" text-anchor="middle">12</text><path d="M14.2 618.2H19.7" stroke="#80868b" stroke-width="1"/><path d="M9.2 630.0H19.7" stroke="#80868b" stroke-width="1"/><path d="M14.2 641.9H19.7" stroke="#80868b" stroke-width="1"/><path d="M14.2 653.7H19.7" stroke="#80868b" stroke-width="1"/><text x="0" y="0" transform="translate(10.5 654.5) rotate(-90)" font-size="13" font-family="Liberation Mono" fill="#4a4a4a" stroke="#4a4a4a" stroke-width="0.35" text-anchor="middle">13</text><path d="M14.2 665.5H19.7" stroke="#80868b" stroke-width="1"/><path d="M9.2 677.3H19.7" stroke="#80868b" stroke-width="1"/><path d="M14.2 689.2H19.7" stroke="#80868b" stroke-width="1"/><path d="M14.2 701.0H19.7" stroke="#80868b" stroke-width="1"/><text x="0" y="0" transform="translate(10.5 701.8) rotate(-90)" font-size="13" font-family="Liberation Mono" fill="#4a4a4a" stroke="#4a4a4a" stroke-width="0.35" text-anchor="middle">14</text><path d="M14.2 712.8H19.7" stroke="#80868b" stroke-width="1"/><path d="M9.2 724.6H19.7" stroke="#80868b" stroke-width="1"/><path d="M14.2 736.5H19.7" stroke="#80868b" stroke-width="1"/><path d="M14.2 748.3H19.7" stroke="#80868b" stroke-width="1"/><text x="0" y="0" transform="translate(10.5 749.1) rotate(-90)" font-size="13" font-family="Liberation Mono" fill="#4a4a4a" stroke="#4a4a4a" stroke-width="0.35" text-anchor="middle">15</text><path d="M14.2 760.1H19.7" stroke="#80868b" stroke-width="1"/><path d="M9.2 772.0H19.7" stroke="#80868b" stroke-width="1"/><path d="M14.2 783.8H19.7" stroke="#80868b" stroke-width="1"/><path d="M14.2 795.6H19.7" stroke="#80868b" stroke-width="1"/><text x="0" y="0" transform="translate(10.5 796.4) rotate(-90)" font-size="13" font-family="Liberation Mono" fill="#4a4a4a" stroke="#4a4a4a" stroke-width="0.35" text-anchor="middle">16</text><path d="M14.2 807.4H19.7" stroke="#80868b" stroke-width="1"/><path d="M9.2 819.2H19.7" stroke="#80868b" stroke-width="1"/><path d="M14.2 831.1H19.7" stroke="#80868b" stroke-width="1"/><path d="M14.2 842.9H19.7" stroke="#80868b" stroke-width="1"/><text x="0" y="0" transform="translate(10.5 843.7) rotate(-90)" font-size="13" font-family="Liberation Mono" fill="#4a4a4a" stroke="#4a4a4a" stroke-width="0.35" text-anchor="middle">17</text><path d="M14.2 854.7H19.7" stroke="#80868b" stroke-width="1"/><circle cx="8" cy="234" r="0.8" fill="#80868b"/></svg>
<div class="a" style="left:20px;top:232px;width:357px;height:1px;background:#c4c7c5"></div>
<div class="a page">
<div class="a" style="left:0;top:0;width:1px;height:627px;background:#c4c7c5"></div>
<div class="a" style="right:0;top:0;width:1px;height:627px;background:#b9bcbf"></div>
<div class="a doc">
<div>digital</div>
<div></div>
<div style="font-weight:bold">Email Profesional de Invitación a Reunión</div>
<div> Redacta un email profesional en el que invites a un cliente potencial a una reunión para</div>
<div>discutir una posible colaboración en un proyecto de desarrollo de software. El mensaje debe</div>
<div>comenzar con un saludo cordial, incluir una breve presentación de la empresa, explicar de</div>
<div>forma concisa el propósito del encuentro y proponer una o dos fechas para agendar la</div>
<div>reunión. Concluye el email con un agradecimiento y una firma. Usa un tono formal y amable,</div>
<div>sin excesivos tecnicismos, que <span style="text-decoration:underline wavy #4a7fe0;text-decoration-skip-ink:none;text-decoration-thickness:1px;text-underline-offset:1px">transmita</span> claridad y profesionalidad.</div>
<div></div>
<div style="font-weight:bold">Artículo de Blog sobre Trabajo Remoto</div>
<div> <span class="sel">Escribe un artículo de blog de aproximadamente 700 palabras que explore las ventajas y </span></div>
<div><span class="sel">desafíos del trabajo remoto. El texto debe comenzar con una introducción que contextualice </span></div>
<div><span class="sel">el auge del teletrabajo, seguido de un desarrollo que analice aspectos positivos (como </span></div>
<div><span class="sel">flexibilidad, equilibrio entre vida personal y profesional) y desafíos (como la necesidad de </span></div>
<div><span class="sel">herramientas de comunicación, sensación de aislamiento). Finaliza con una conclusión que </span></div>
<div><span class="sel">sintetice los puntos discutidos y <span style="text-decoration:underline wavy #4a7fe0;text-decoration-skip-ink:none;text-decoration-thickness:1px;text-underline-offset:1px">sugiera</span> recomendaciones para quienes adoptan esta </span></div>
<div><span class="sel">modalidad. El tono debe ser cercano, informativo y accesible para un público profesional y </span></div>
<div><span class="sel" style="padding-right:4px">general. </span></div>
</div>
</div>
<svg class="a" style="left:705px;top:671px" width="10" height="16" viewBox="0 0 10 16"><path d="M2 1H8M5 1V15M2 15H8" stroke="#222" stroke-width="1.2" fill="none"/></svg>
<svg class="a" style="left:47.7px;top:254.5px" width="27.6" height="27.6" viewBox="0 0 24 24"><path d="M4.5 12H20.5M12 3.5L3.8 12 12 20.5" stroke="#444746" stroke-width="1.75" fill="none"/></svg>
<div class="a" style="left:55px;top:322px;font-size:18.5px;line-height:22px;color:#444746;white-space:nowrap;-webkit-text-stroke:0.2px #444746">Pestañas del documento</div>
<svg class="a" style="left:306px;top:323px" width="20" height="20" viewBox="0 0 24 24"><path d="M19 13h-6v6h-2v-6H5v-2h6V5h2v6h6v2z" fill="#444746"/></svg>
<div class="a" style="left:40px;top:366px;width:310px;height:49px;border-radius:25px;background:#d3e3fd"></div>
<svg class="a" style="left:63px;top:379px" width="24" height="24" viewBox="0 0 24 24"><rect x="4" y="4" width="16" height="16" rx="1.5" stroke="#041e49" stroke-width="2" fill="none"/><path d="M7.5 8.5H16.5M7.5 12H16.5M7.5 15.5H13" stroke="#041e49" stroke-width="1.8"/></svg>
<div class="a" style="left:98.5px;top:380.5px;font-size:18px;line-height:22px;color:#041e49;white-space:nowrap;-webkit-text-stroke:0.3px #041e49;letter-spacing:-0.25px">Pestaña 1</div>
<svg class="a" style="left:312px;top:379px" width="10" height="24" viewBox="0 0 10 24"><circle cx="5" cy="5" r="2" fill="#041e49"/><circle cx="5" cy="12" r="2" fill="#041e49"/><circle cx="5" cy="19" r="2" fill="#041e49"/></svg>
<div class="a" style="left:50px;top:425px;font-size:16.2px;line-height:21.6px;color:#5f6368;font-style:italic;white-space:nowrap">Los encabezados que agregues al<br>documento se mostrarán aquí.</div>
<div class="a" style="left:1515px;top:376px;width:10px;height:248px;border-radius:5px;background:#dadce0"></div>
<div class="a" style="left:1345px;top:436px;width:50px;height:160px;border-radius:25px;background:#f8fafd;box-shadow:0 1px 3px rgba(0,0,0,.22),0 4px 12px rgba(0,0,0,.1)"></div>
<svg class="a" style="left:1357px;top:451px" width="28" height="28" viewBox="0 0 24 24"><path d="M22 4c0-1.1-.9-2-2-2H4c-1.1 0-1.99.9-1.99 2L2 22l4-4h14c1.1 0 2-.9 2-2V4zm-2 12H5.17L4 17.17V4h16v12zM13 5h-2v4H7v2h4v4h2v-4h4V9h-4z" fill="#1a5bd0"/></svg>
<svg class="a" style="left:1357px;top:502px" width="28" height="28" viewBox="0 0 24 24"><circle cx="15.5" cy="9.5" r="1.5" fill="#0b57d0"/><circle cx="8.5" cy="9.5" r="1.5" fill="#0b57d0"/><path d="M11.99 2C6.47 2 2 6.48 2 12s4.47 10 9.99 10C17.52 22 22 17.52 22 12S17.52 2 11.99 2zM12 20c-4.42 0-8-3.58-8-8s3.58-8 8-8 8 3.58 8 8-3.58 8-8 8zm-5-6c.78 2.34 2.72 4 5 4s4.22-1.66 5-4H7z" fill="#1a5bd0"/></svg>
<svg class="a" style="left:1357px;top:552px" width="28" height="28" viewBox="0 0 24 24"><path d="M20 2H4c-1.1 0-1.99.9-1.99 2L2 22l4-4h14c1.1 0 2-.9 2-2V4c0-1.1-.9-2-2-2zm0 14H5.17l-.59.59-.58.58V4h16v12zm-9.5-2H18v-2h-5.5zm3.86-5.87c.2-.2.2-.51 0-.71l-1.77-1.77c-.2-.2-.51-.2-.71 0L6 11.53V14h2.47l5.89-5.87z" fill="#1a5bd0"/></svg>
<svg class="a" style="left:1553px;top:170px" width="24" height="23" viewBox="0 0 24 23"><rect x="0" y="0" width="24" height="23" rx="2" fill="#1e6fe0"/><rect x="19" y="0" width="5" height="18.5" rx="0" fill="#fbbc04"/><rect x="0" y="18.5" width="19" height="4.5" fill="#34a853"/><path d="M19 18.5H24L19 23Z" fill="#ea4335"/><rect x="4" y="4" width="15" height="14.5" fill="#fff"/><text x="11.5" y="15.5" font-size="10" font-family="Liberation Sans" fill="#3a6fd8" text-anchor="middle">31</text></svg>
<svg class="a" style="left:1553px;top:240px" width="24" height="24" viewBox="0 0 24 24"><rect x="0" y="0" width="24" height="24" rx="2" fill="#fbbc04"/><circle cx="12" cy="10" r="4.8" fill="#fff"/><rect x="9.5" y="15" width="5" height="2" fill="#fff"/><rect x="10" y="18" width="4" height="1.2" fill="#fff"/></svg>
<svg class="a" style="left:1553px;top:309px" width="24" height="24" viewBox="0 0 24 24"><path d="M19.2 9.5A8.3 8.3 0 1 1 14.5 5" stroke="#1e6fe0" stroke-width="3.2" fill="none"/><path d="M7.2 12.8L10.8 16.2 19.5 6.5" stroke="#1e6fe0" stroke-width="3" fill="none"/><path d="M17 3.5L21.5 2 20.5 6.5Z" fill="#1e6fe0"/></svg>
<svg class="a" style="left:1555px;top:380px" width="20" height="24" viewBox="0 0 20 24"><circle cx="10" cy="5.5" r="4.5" fill="#0b57d0"/><path d="M2 22V18Q2 12 10 12 18 12 18 18V22Z" fill="#0b57d0"/><path d="M2 19Q5 15 10 15" stroke="#6fa0ea" stroke-width="1.2" fill="none"/></svg>
<svg class="a" style="left:1556px;top:449px" width="18" height="26" viewBox="0 0 18 26"><path d="M9 1C4.6 1 1 4.6 1 9C1 14 9 25 9 25S17 14 17 9C17 4.6 13.4 1 9 1Z" fill="#34a853"/><path d="M9 1C4.6 1 1 4.6 1 9C1 10.5 1.6 12 2.3 13.5L13 3Q11 1 9 1Z" fill="#1a73e8"/><path d="M13 3L2.3 13.5 4 16 16 5Q14.5 3.5 13 3Z" fill="#ea4335"/><path d="M16 5L4 16Q6 19.5 9 25 17 14 17 9Q17 6.5 16 5Z" fill="#fbbc04"/><path d="M16 5L6.5 14Q7.7 16 9 18.5L15.5 12Q17 10 17 9 17 6.5 16 5Z" fill="#4285f4"/><circle cx="9" cy="9" r="3" fill="#fff"/></svg>
<div class="a" style="left:1552px;top:517px;width:26px;height:1px;background:#dadce0"></div>
<svg class="a" style="left:1555px;top:562px" width="20" height="20" viewBox="0 0 20 20"><path d="M10 2V18M2 10H18" stroke="#1f1f1f" stroke-width="2"/></svg>
<svg class="a" style="left:1558px;top:816px" width="14" height="16" viewBox="0 0 14 16"><path d="M4.5 2.5L10 8 4.5 13.5" stroke="#444746" stroke-width="1.8" fill="none"/></svg>
<div class="a taskbar"></div>
<svg class="a" style="left:16px;top:866px" width="24" height="26" viewBox="0 0 24 26"><circle cx="10" cy="12" r="8" fill="#f5a623"/><path d="M4 22Q2 22 2 19.5 2 17 4.5 17 5.5 14 9 14 12 14 13 16.5 14 15.5 16 15.5 19.5 15.5 20 19 22 19.5 22 21 22 22 20 22Z" fill="#d9e6f2" stroke="#b7cbe0" stroke-width="0.6"/></svg>
<div class="a" style="left:25px;top:865px;width:13px;height:13px;border-radius:50%;background:#c42b1c;color:#fff;font-size:9.5px;line-height:13px;text-align:center">6</div>
<div class="a" style="left:42px;top:867px;font-size:10.5px;line-height:12px;color:#1f1f1f;white-space:nowrap;letter-spacing:-0.3px;-webkit-text-stroke:0.2px #1f1f1f">30°C</div>
<div class="a" style="left:42px;top:880px;font-size:10.5px;line-height:12px;color:#646a72;white-space:nowrap;letter-spacing:-0.3px">Parc ensolarado</div>
<svg class="a" style="left:477px;top:870px" width="20" height="20" viewBox="0 0 20 20"><defs><linearGradient id="wg" x1="0" y1="0" x2="1" y2="1"><stop offset="0" stop-color="#3ccbf4"/><stop offset="1" stop-color="#1a78d6"/></linearGradient></defs><rect x="0" y="0" width="9.5" height="9.5" fill="url(#wg)"/><rect x="10.5" y="0" width="9.5" height="9.5" fill="url(#wg)"/><rect x="0" y="10.5" width="9.5" height="9.5" fill="url(#wg)"/><rect x="10.5" y="10.5" width="9.5" height="9.5" fill="url(#wg)"/></svg>
<div class="a" style="left:509px;top:866px;width:180px;height:28px;border-radius:14px;background:#f3f6fb;border:1px solid #d9e0ea"></div>
<svg class="a" style="left:515px;top:872px" width="16" height="16" viewBox="0 0 16 16"><circle cx="6.5" cy="6.5" r="4.8" stroke="#1f1f1f" stroke-width="1.6" fill="none"/><path d="M10 10L14.5 14.5" stroke="#1f1f1f" stroke-width="1.7"/></svg>
<div class="a" style="left:538px;top:873px;font-size:12.5px;line-height:14px;color:#5b5f66;white-space:nowrap">Búsqueda</div>
<svg class="a" style="left:648px;top:870px" width="36" height="20" viewBox="0 0 36 20"><rect x="5" y="4" width="26" height="13" rx="2.5" fill="#d7a84a" stroke="#8a6420" stroke-width="1"/><rect x="9" y="8" width="18" height="6" rx="1" fill="#b88630"/><path d="M2 3L5 5M34 3L31 5M1 10H4M32 10H35" stroke="#f0c060" stroke-width="1"/></svg>
<div class="a" style="left:699.0px;top:871.0px"><svg width="18" height="18" viewBox="0 0 18 18"><rect x="5" y="1" width="12" height="12" fill="#e8e8e8" stroke="#bbb" stroke-width="0.5"/><rect x="1" y="5" width="12" height="12" fill="#1f1f1f"/></svg></div>
<div class="a" style="left:736.0px;top:870.0px"><svg width="20" height="20" viewBox="0 0 20 20"><path d="M3 6Q4 1 9 2L15 3Q19 4 18 9L17 14Q16 19 11 18L5 17Q1 16 2 11Z" fill="#7b5cf0"/><path d="M9 2L15 3Q19 4 18 9L12 10Z" fill="#3ab0f0"/><path d="M2 11L8 10 11 18 5 17Q1 16 2 11Z" fill="#f0a030"/><path d="M12 10L18 9 17 14Q16 19 11 18Z" fill="#f05090"/><circle cx="10" cy="10" r="3" fill="#dde7f4"/></svg></div>
<div class="a" style="left:772.0px;top:871.0px"><svg width="22" height="18" viewBox="0 0 22 18"><path d="M1 3Q1 1 3 1H9L11 3H19Q21 3 21 5V16Q21 17 20 17H2Q1 17 1 16Z" fill="#f2b90c"/><path d="M1 7H21V16Q21 17 20 17H2Q1 17 1 16Z" fill="#ffd24a"/><rect x="3" y="13" width="16" height="2" fill="#3a8ee6"/></svg></div>
<div class="a" style="left:810.0px;top:870.0px"><svg width="20" height="20" viewBox="0 0 20 20"><circle cx="10" cy="10" r="9" fill="#1a8ad6"/><path d="M3 12Q5 4 12 4 18 4 18.5 10 16 8 12 8.5 8 9 8 12.5 8 16 13 17 6 19 3 12Z" fill="#5fe07a"/><path d="M8 12.5Q8 9 12 8.5 16 8 18.5 10 19 15 13 17 8 16 8 12.5Z" fill="#0e5fb0"/><ellipse cx="12.5" cy="12.5" rx="3" ry="2" fill="#dde7f4"/></svg></div>
<div class="a" style="left:847.0px;top:870.0px"><svg width="20" height="20" viewBox="0 0 20 20"><rect x="0" y="0" width="20" height="20" rx="2" fill="#1b6bd2"/><circle cx="10" cy="10" r="7" stroke="#fff" stroke-width="1.2" fill="none"/><text x="10" y="12" font-size="5.5" font-family="Liberation Sans" fill="#fff" text-anchor="middle" font-weight="bold">DELL</text></svg></div>
<div class="a" style="left:883.0px;top:870.0px"><svg width="20" height="20" viewBox="0 0 20 20"><path d="M6 5V3.5Q6 1.5 10 1.5 14 1.5 14 3.5V5" stroke="#1a73c8" stroke-width="1.3" fill="none"/><rect x="1" y="5" width="18" height="14" rx="2" fill="#1a64c8"/><rect x="6" y="8.5" width="3.6" height="3.6" fill="#f25022"/><rect x="10.4" y="8.5" width="3.6" height="3.6" fill="#7fba00"/><rect x="6" y="12.9" width="3.6" height="3.6" fill="#00a4ef"/><rect x="10.4" y="12.9" width="3.6" height="3.6" fill="#ffb900"/></svg></div>
<div class="a" style="left:956.0px;top:869.0px"><svg width="22" height="22" viewBox="0 0 22 22"><circle cx="11" cy="11" r="9.5" fill="#2e2e2e"/><circle cx="11" cy="11" r="5" fill="#5a5a5a"/><circle cx="11" cy="6.5" r="2.6" fill="#e0e0e0"/><circle cx="7" cy="13.5" r="2.6" fill="#e0e0e0"/><circle cx="15" cy="13.5" r="2.6" fill="#e0e0e0"/><circle cx="18" cy="3.5" r="4" fill="#e81123"/></svg></div>
<div class="a" style="left:993.0px;top:869.0px"><svg width="22" height="22" viewBox="0 0 22 22"><path d="M11 1.5A9.5 9.5 0 0 0 2.8 15.8L1.5 20.5 6.3 19.2A9.5 9.5 0 1 0 11 1.5Z" fill="none" stroke="#25a35a" stroke-width="1.8"/><path d="M7.5 6.5Q6.5 7.5 7 9.5 8.5 13 12.5 15 14.5 15.7 15.5 14.5L15.2 13 13.3 12.2 12.3 13Q10 12 9 9.7L9.8 8.7 9 6.7Z" fill="#25a35a"/></svg></div>
<div class="a" style="left:1030.0px;top:869.0px"><svg width="20" height="22" viewBox="0 0 20 22"><rect x="0" y="0" width="20" height="22" rx="3" fill="#1d3b4f"/><path d="M7 4L14 9 7 14Z" fill="#3ddbb0"/><rect x="5" y="17" width="10" height="2" fill="#fff"/></svg></div>
<div class="a" style="left:1066.0px;top:870.0px"><svg width="22" height="20" viewBox="0 0 22 20"><path d="M2 12Q2 2 11 2 20 2 20 12" stroke="#3050e0" stroke-width="2.5" fill="none"/><rect x="1" y="10" width="4.5" height="8" rx="2" fill="#3050e0"/><rect x="16.5" y="10" width="4.5" height="8" rx="2" fill="#3050e0"/><path d="M6 14H8L9 10 11 17 13 11 14 14H16" stroke="#f03030" stroke-width="1.6" fill="none"/></svg></div>
<div class="a" style="left:1106.0px;top:869.0px"><svg width="16" height="22" viewBox="0 0 16 22"><rect x="1" y="2" width="14" height="19" fill="#2bb0c8"/><rect x="1" y="2" width="14" height="4" fill="#2090b0"/><path d="M3 9H13M3 12H13M3 15H13M3 18H13" stroke="#dff5fb" stroke-width="1"/><path d="M3 1V3M6 1V3M9 1V3M12 1V3" stroke="#555" stroke-width="0.8"/><rect x="1" y="20" width="14" height="1.5" fill="#e0a020"/></svg></div>
<div class="a" style="left:911px;top:864px;width:38px;height:34px;border-radius:5px;background:#eef3fa"></div>
<svg class="a" style="left:920px;top:870px" width="20" height="20" viewBox="0 0 20 20"><path d="M10 10L1.34 5A10 10 0 0 1 18.66 5Z" fill="#ea4335"/><path d="M10 10L18.66 5A10 10 0 0 1 10 20Z" fill="#fbbc04"/><path d="M10 10L10 20A10 10 0 0 1 1.34 5Z" fill="#34a853"/><circle cx="10" cy="10" r="4.5" fill="#fff"/><circle cx="10" cy="10" r="3.5" fill="#4285f4"/></svg>
<div class="a" style="left:922px;top:895px;width:16px;height:2.5px;border-radius:1.5px;background:#5b6b8a"></div>
<div class="a" style="left:964px;top:895.5px;width:6px;height:2px;border-radius:1px;background:#7a8598"></div>
<div class="a" style="left:700px;top:895.5px;width:0px;height:2px;background:#7a8598"></div>
<div class="a" style="left:781px;top:895.5px;width:6px;height:2px;border-radius:1px;background:#7a8598"></div>
<div class="a" style="left:1111px;top:895.5px;width:6px;height:2px;border-radius:1px;background:#7a8598"></div>
<svg class="a" style="left:1387px;top:875px" width="12" height="10" viewBox="0 0 12 10"><path d="M1.5 7.5L6 3 10.5 7.5" stroke="#1f1f1f" stroke-width="1.3" fill="none"/></svg>
<svg class="a" style="left:1410px;top:871px" width="20" height="18" viewBox="0 0 20 18"><path d="M5 15Q1 15 1 11.5 1 8 4.5 8 5.5 4 10 4 14.5 4 15.5 8.5 19 9 19 12 19 15 15.5 15Z" stroke="#1f1f1f" stroke-width="1.4" fill="none"/><path d="M3 2L17 16" stroke="#1f1f1f" stroke-width="1.4"/></svg>
<svg class="a" style="left:1440px;top:870px" width="12" height="20" viewBox="0 0 12 20"><rect x="3.5" y="1" width="5" height="11" rx="2.5" stroke="#555" stroke-width="1.2" fill="none"/><path d="M1 9Q1 15 6 15 11 15 11 9M6 15V19" stroke="#555" stroke-width="1.2" fill="none"/></svg>
<div class="a" style="left:1468px;top:868px;font-size:10px;line-height:13px;color:#1f1f1f;text-align:center;width:20px">ESP<br>ES</div>
<svg class="a" style="left:1501px;top:872px" width="18" height="16" viewBox="0 0 18 16"><path d="M1 6Q9 -1 17 6M3.5 8.5Q9 4 14.5 8.5M6 11Q9 8.5 12 11" stroke="#1f1f1f" stroke-width="1.3" fill="none"/><circle cx="9" cy="13.5" r="1.3" fill="#1f1f1f"/></svg>
<svg class="a" style="left:1521px;top:871px" width="18" height="18" viewBox="0 0 18 18"><path d="M2 7H5L9 3V15L5 11H2Z" stroke="#1f1f1f" stroke-width="1.2" fill="none"/><path d="M11.5 6.5Q13 9 11.5 11.5M13.5 4.5Q16 9 13.5 13.5" stroke="#1f1f1f" stroke-width="1.2" fill="none"/></svg>
<svg class="a" style="left:1540px;top:871px" width="20" height="18" viewBox="0 0 20 18"><rect x="1" y="5" width="13" height="9" rx="1" stroke="#1f1f1f" stroke-width="1.3" fill="none"/><path d="M3 2L17 16" stroke="#1f1f1f" stroke-width="1.4"/><path d="M12 12Q12 9 15 9 18 9 18 12V15H12Z" fill="#1f1f1f"/></svg>
<svg class="a" style="left:1569px;top:871px" width="16" height="18" viewBox="0 0 16 18"><path d="M8 1Q3 1 3 7V11L1.5 14H14.5L13 11V7Q13 1 8 1Z" fill="#1a2a6c"/><path d="M6 15.5Q8 18 10 15.5" fill="#1a2a6c"/></svg>
</body></html>
